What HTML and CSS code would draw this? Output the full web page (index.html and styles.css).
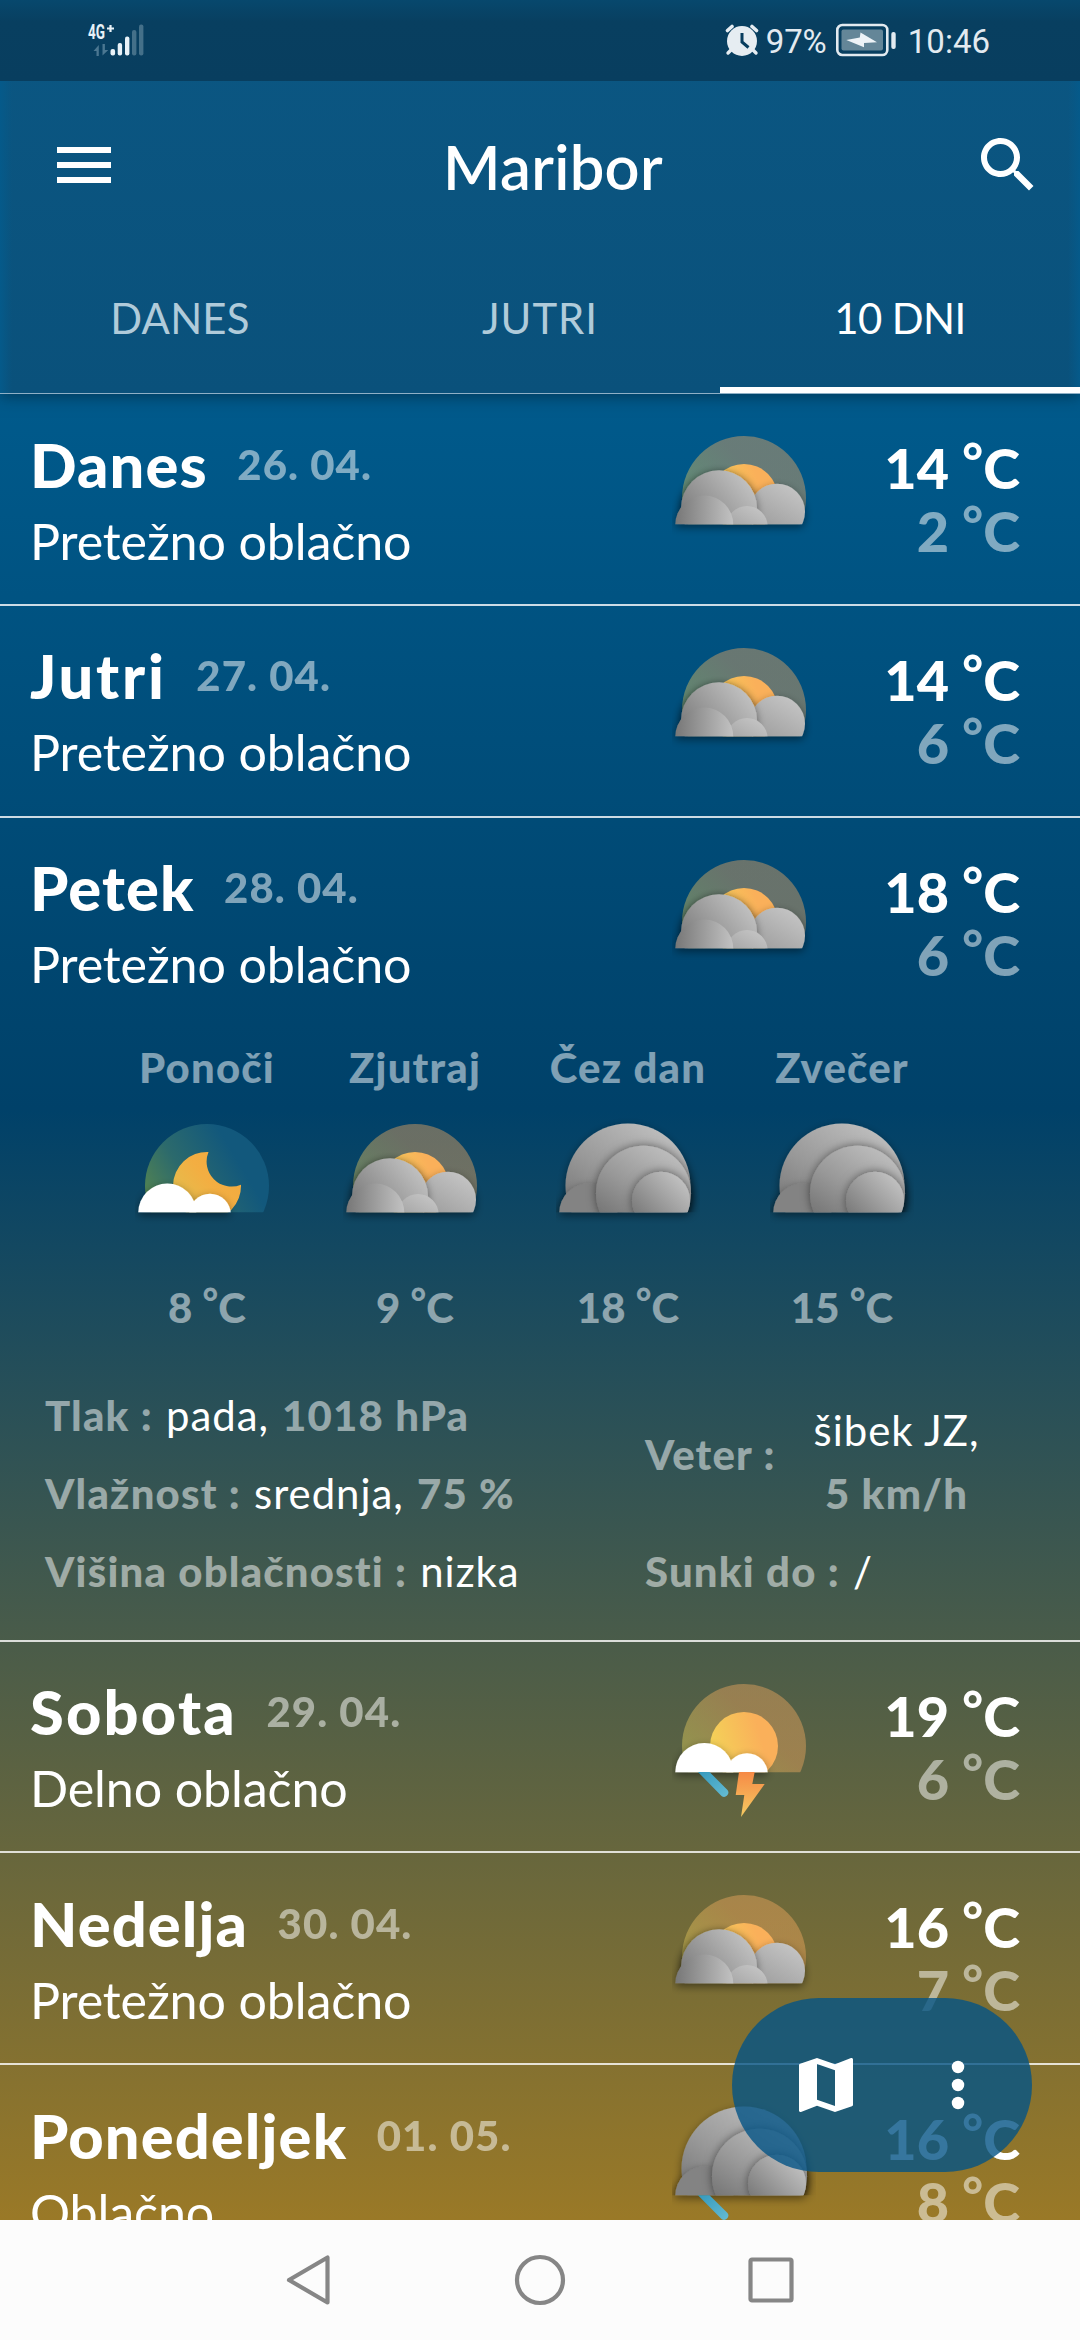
FILE: index.html
```html
<!DOCTYPE html>
<html lang="sl">
<head>
<meta charset="utf-8">
<title>Maribor</title>
<link rel="stylesheet" href="styles.css">
</head>
<body>
<svg class="defs" width="0" height="0" aria-hidden="true">
  <defs>
    <linearGradient id="sun" x1="0" y1=".6" x2="1" y2=".3"><stop offset="0" stop-color="#f3d458"/><stop offset=".75" stop-color="#fab05a"/></linearGradient>
    <linearGradient id="halo" x1="0" y1=".7" x2=".7" y2="0"><stop offset="0" stop-color="#e0e25c"/><stop offset=".7" stop-color="#f8ac60"/></linearGradient>
    <linearGradient id="nightHalo" x1="0" y1=".75" x2=".75" y2=".3"><stop offset="0" stop-color="#5d8a4a"/><stop offset=".5" stop-color="#2c6a6c"/><stop offset="1" stop-color="#12587c"/></linearGradient>
    <linearGradient id="moon" x1="0" y1="1" x2="1" y2=".2"><stop offset="0" stop-color="#dcc552"/><stop offset=".6" stop-color="#f3ae42"/><stop offset="1" stop-color="#f0aa3e"/></linearGradient>
    <linearGradient id="grayA" x1="0" y1=".85" x2=".9" y2=".1"><stop offset="0" stop-color="#6e6e6e"/><stop offset=".45" stop-color="#959595"/><stop offset="1" stop-color="#c4c4c4"/></linearGradient>
    <linearGradient id="grayB" x1="0" y1="0" x2="1" y2="0"><stop offset="0" stop-color="#777"/><stop offset="1" stop-color="#c2c2c2"/></linearGradient>
    <linearGradient id="grayC" x1=".2" y1="1" x2=".8" y2="0"><stop offset="0" stop-color="#959595"/><stop offset="1" stop-color="#c6c6c6"/></linearGradient>
    <linearGradient id="grayD" x1=".1" y1=".9" x2=".7" y2="0"><stop offset="0" stop-color="#6c6c6c"/><stop offset=".5" stop-color="#989898"/><stop offset="1" stop-color="#bdbdbd"/></linearGradient>
    <linearGradient id="grayE" x1=".1" y1=".9" x2=".9" y2=".1"><stop offset="0" stop-color="#747474"/><stop offset="1" stop-color="#c4c4c4"/></linearGradient>
    <linearGradient id="rain" x1="0" y1="0" x2="1" y2="1"><stop offset="0" stop-color="#3499bd"/><stop offset="1" stop-color="#66bcd3"/></linearGradient>
    <linearGradient id="bolt" x1="0" y1="0" x2="0" y2="1"><stop offset="0" stop-color="#f68a46"/><stop offset="1" stop-color="#f5cb62"/></linearGradient>
    <filter id="soft" x="-40%" y="-40%" width="180%" height="180%"><feDropShadow dx="0" dy="3" stdDeviation="4.500" flood-color="#000" flood-opacity=".45"/></filter>
    <filter id="fold" x="-40%" y="-40%" width="180%" height="180%"><feDropShadow dx="0" dy="0" stdDeviation="5" flood-color="#000" flood-opacity=".5"/></filter>
    <clipPath id="ground"><rect x="-80" y="-80" width="160" height="106.3"/></clipPath>

    <symbol id="mostly-cloudy" viewBox="-72 -72 144 160">
      <g clip-path="url(#ground)"><circle r="62" fill="url(#halo)" opacity=".42"/><circle r="34" fill="url(#sun)"/></g>
      <g filter="url(#soft)"><g clip-path="url(#ground)">
        <circle cx="33" cy="13.7" r="28" fill="url(#grayC)"/>
        <circle cx="-25" cy="10.3" r="38" fill="url(#grayA)" filter="url(#soft)"/>
        <circle cx="3" cy="28.5" r="20.6" fill="url(#grayC)"/>
        <circle cx="-39.7" cy="26.5" r="29" fill="url(#grayB)"/>
      </g></g>
    </symbol>
    <symbol id="overcast" viewBox="-72 -72 144 160">
      <g filter="url(#soft)"><g clip-path="url(#ground)">
        <circle r="62.5" fill="url(#grayD)"/>
        <circle cx="-39.7" cy="26.5" r="29" fill="#838383" filter="url(#soft)"/>
        <circle cx="15.5" cy="7.3" r="47.5" fill="url(#grayD)" filter="url(#fold)"/>
        <circle cx="33" cy="14.7" r="29" fill="url(#grayE)" filter="url(#fold)"/>
      </g></g>
    </symbol>
    <symbol id="night" viewBox="-72 -72 144 160">
      <g clip-path="url(#ground)"><circle r="62" fill="url(#nightHalo)"/>
      <path d="M1.5-34A25 25 0 0 0 34-1.3A34 34 0 1 1 1.5-34Z" fill="url(#moon)"/></g>
      <g filter="url(#soft)"><g clip-path="url(#ground)" fill="#fff"><circle cx="-39.7" cy="26.5" r="29"/><circle cx="3" cy="28.5" r="20.8"/></g></g>
    </symbol>
    <symbol id="storm" viewBox="-72 -72 144 160">
      <g clip-path="url(#ground)"><circle r="62" fill="url(#halo)" opacity=".42"/><circle r="34" fill="url(#sun)"/></g>
      <g filter="url(#soft)"><g clip-path="url(#ground)" fill="#fff"><circle cx="-39.7" cy="26" r="29"/><circle cx="3" cy="28" r="20.8"/></g></g>
      <path d="M-46 26h11.500L-16.500 44a4.300 4.300 0 0 1-6 6Z" fill="url(#rain)"/>
      <path d="M-5 26h15.700L8.300 38h12.400L-3 71L.3 49H-8.300Z" fill="url(#bolt)"/>
    </symbol>
    <symbol id="drizzle" viewBox="-72 -72 144 160">
      <use href="#overcast" x="-72" y="-72" width="144" height="160"/>
      <path d="M-46 26.300h11.500L-16.500 44a4.300 4.300 0 0 1-6 6Z" fill="url(#rain)"/>
    </symbol>
  </defs>
</svg>

<div class="screen">
  <header class="header">
    <div class="status">
      <svg class="signal" width="60" height="36" viewBox="86 22 60 36">
        <text class="net" x="88" y="38.500" textLength="17" lengthAdjust="spacingAndGlyphs">4G</text>
        <path d="M110.500 25v7M107 28.500h7" stroke="#e8f2f8" stroke-width="2.200"/>
        <path d="M98.800 56v-11l-5.300 6h3v5zM102.500 44v11.500l5.800-5.500h-3.400v-6z" fill="#4b7791"/>
        <g fill="#e8f2f8"><rect x="110.500" y="49" width="4.600" height="6.500" rx="2"/><rect x="117.700" y="43" width="4.400" height="12.500" rx="2"/><rect x="125" y="36.500" width="4.400" height="19" rx="2"/></g>
        <g fill="#447089"><rect x="132" y="30" width="4.400" height="25.500" rx="2"/><rect x="139" y="24.500" width="4.400" height="31" rx="2"/></g>
      </svg>
      <div class="status-right">
        <svg width="34" height="34" viewBox="0 0 34 34">
          <path d="M7 28l-4 4M27 28l4 4" stroke="#e6edf2" stroke-width="3.400" stroke-linecap="round" transform="translate(0 -2)"/>
          <path d="M2.500 7.500L7 3.500M31.500 7.500L27 3.500" stroke="#e6edf2" stroke-width="3.600" stroke-linecap="round"/>
          <circle cx="17" cy="18" r="15" fill="#e6edf2"/>
          <path d="M17 10v9l6.500 5.500" fill="none" stroke="#083e5f" stroke-width="3"/>
        </svg>
        <span class="pct">97%</span>
        <svg width="60" height="34" viewBox="0 0 60 34">
          <rect x="1.300" y="2" width="50" height="30" rx="5" fill="none" stroke="#e2eaf0" stroke-width="2.600"/>
          <rect x="5.500" y="6.500" width="41.500" height="21" rx="2" fill="#648698"/>
          <path d="M10.300 17L23.800 14.500L24.500 9.500L41 19.300L28 20V24.300Z" fill="#eef3f7"/>
          <rect x="55.300" y="9" width="4.400" height="17" rx="2" fill="#e2eaf0"/>
        </svg>
        <span class="clock">10:46</span>
      </div>
    </div>
    <div class="appbar">
      <svg width="72" height="72" viewBox="0 0 24 24" fill="#fff"><path d="M3 18h18v-2H3v2zm0-5h18v-2H3v2zm0-7v2h18V6H3z"/></svg>
      <h1 class="title">Maribor</h1>
      <svg width="72" height="72" viewBox="0 0 24 24" fill="#fff"><path d="M15.500 14h-.79l-.28-.27C15.410 12.590 16 11.110 16 9.500 16 5.910 13.090 3 9.500 3S3 5.910 3 9.500 5.910 16 9.500 16c1.610 0 3.090-.59 4.230-1.570l.27.28v.79l5 4.990L20.490 19l-4.990-5zm-6 0C7.010 14 5 11.990 5 9.500S7.010 5 9.500 5 14 7.010 14 9.500 11.990 14 9.500 14z"/></svg>
    </div>
    <nav class="tabs">
      <a class="tab">DANES</a>
      <a class="tab tab-jutri">JUTRI</a>
      <a class="tab active">10 DNI</a>
    </nav>
  </header>

  <main class="days">
    <section class="day">
      <div class="summary">
        <div class="info"><div class="head"><h2>Danes</h2><span class="date">26. 04.</span></div><p>Pretežno oblačno</p></div>
        <svg class="wx"><use href="#mostly-cloudy"/></svg>
        <div class="temps"><div>14 <i>°</i>C</div><div class="low">2 <i>°</i>C</div></div>
      </div>
    </section>
    <section class="day">
      <div class="summary">
        <div class="info"><div class="head"><h2 class="wider">Jutri</h2><span class="date">27. 04.</span></div><p>Pretežno oblačno</p></div>
        <svg class="wx"><use href="#mostly-cloudy"/></svg>
        <div class="temps"><div>14 <i>°</i>C</div><div class="low">6 <i>°</i>C</div></div>
      </div>
    </section>
    <section class="day open">
      <div class="summary">
        <div class="info"><div class="head"><h2>Petek</h2><span class="date">28. 04.</span></div><p>Pretežno oblačno</p></div>
        <svg class="wx"><use href="#mostly-cloudy"/></svg>
        <div class="temps"><div>18 <i>°</i>C</div><div class="low">6 <i>°</i>C</div></div>
      </div>
      <div class="periods">
        <div class="period"><span>Ponoči</span><svg class="wx"><use href="#night"/></svg><span class="deg">8 <i>°</i>C</span></div>
        <div class="period"><span>Zjutraj</span><svg class="wx"><use href="#mostly-cloudy"/></svg><span class="deg">9 <i>°</i>C</span></div>
        <div class="period"><span>Čez dan</span><svg class="wx"><use href="#overcast"/></svg><span class="deg">18 <i>°</i>C</span></div>
        <div class="period"><span>Zvečer</span><svg class="wx"><use href="#overcast"/></svg><span class="deg">15 <i>°</i>C</span></div>
      </div>
      <div class="details">
        <div class="col">
          <div class="item"><b>Tlak :</b><span>pada,</span><b>1018 hPa</b></div>
          <div class="item"><b>Vlažnost :</b><span>srednja,</span><b>75 %</b></div>
          <div class="item"><b>Višina oblačnosti :</b><span>nizka</span></div>
        </div>
        <div class="col">
          <div class="item wind"><b>Veter :</b><div class="wind-value"><span>šibek JZ,</span><b>5 km/h</b></div></div>
          <div class="item"><b>Sunki do :</b><span>/</span></div>
        </div>
      </div>
    </section>
    <section class="day">
      <div class="summary">
        <div class="info"><div class="head"><h2 class="wide">Sobota</h2><span class="date">29. 04.</span></div><p>Delno oblačno</p></div>
        <svg class="wx"><use href="#storm"/></svg>
        <div class="temps"><div>19 <i>°</i>C</div><div class="low">6 <i>°</i>C</div></div>
      </div>
    </section>
    <section class="day">
      <div class="summary">
        <div class="info"><div class="head"><h2>Nedelja</h2><span class="date">30. 04.</span></div><p>Pretežno oblačno</p></div>
        <svg class="wx"><use href="#mostly-cloudy"/></svg>
        <div class="temps"><div>16 <i>°</i>C</div><div class="low">7 <i>°</i>C</div></div>
      </div>
    </section>
    <section class="day">
      <div class="summary">
        <div class="info"><div class="head"><h2>Ponedeljek</h2><span class="date">01. 05.</span></div><p>Oblačno</p></div>
        <svg class="wx"><use href="#drizzle"/></svg>
        <div class="temps"><div>16 <i>°</i>C</div><div class="low">8 <i>°</i>C</div></div>
      </div>
    </section>
  </main>

  <div class="fab">
    <svg width="72" height="72" viewBox="0 0 24 24" fill="#fff"><path d="M20.500 3l-.16.03L15 5.100 9 3 3.360 4.900c-.21.07-.36.25-.36.48V20.500c0 .28.22.5.5.5l.16-.03L9 18.900l6 2.100 5.640-1.900c.21-.07.36-.25.36-.48V3.500c0-.28-.22-.5-.5-.5zM15 19l-6-2.110V5l6 2.110V19z"/></svg>
    <svg width="72" height="72" viewBox="0 0 24 24" fill="#fff"><circle cx="12" cy="6" r="2.080"/><circle cx="12" cy="12" r="2.080"/><circle cx="12" cy="18" r="2.080"/></svg>
  </div>

  <footer class="navbar">
    <svg width="50" height="56" viewBox="0 0 50 56"><path d="M43.500 5.500v45L5 28Z"/></svg>
    <svg width="56" height="56" viewBox="0 0 56 56"><circle cx="28" cy="28" r="23"/></svg>
    <svg width="50" height="56" viewBox="0 0 50 56"><rect x="4.500" y="7.500" width="41" height="41" rx="1.500"/></svg>
  </footer>
</div>
</body>
</html>
```
FILE: styles.css
```css
* { box-sizing: border-box; }
html, body { margin: 0; padding: 0; }
body { width: 1080px; height: 2340px; overflow: hidden; font-family: Lato, "Open Sans", sans-serif; color: #fff; }
h1, h2, p { margin: 0; }
b { font-weight: 900; }
i { font-style: normal; font-size: .9em; line-height: 0; vertical-align: .19em; }
.defs { position: absolute; }

.screen {
  position: relative;
  display: flex;
  flex-direction: column;
  height: 2340px;
  background: linear-gradient(#00689f 0, #004169 1109px, #9a7927 2220px);
}

.header {
  position: relative;
  z-index: 1;
  flex: none;
  height: 394px;
  background: linear-gradient(90deg, #055a8a 0, rgba(5, 90, 138, 0) 12px, rgba(5, 90, 138, 0) 1068px, #055a8a 1080px), linear-gradient(#0b5783, #0a517b);
  border-bottom: 1px solid #8fb0c6;
  box-shadow: 0 3px 14px rgba(0, 30, 45, .5);
}
.status {
  display: flex;
  justify-content: space-between;
  height: 81px;
  padding: 22px 90px 0 86px;
  background: linear-gradient(#07486d 0, #083f60 22px, #083e5f 100%);
}
.signal { overflow: visible; }
.net { font: 700 20px Roboto, sans-serif; fill: #e8f2f8; }
.status-right { display: flex; align-items: flex-start; font: 400 33px/39px Roboto, sans-serif; color: #e2eaf0; padding-top: 1px; }
.status-right span { margin-top: -1px; }
.status-right .pct { width: 63px; margin-left: 7px; margin-right: 7px; letter-spacing: -.2px; }
.clock { margin-left: 12px; }
.appbar { display: flex; align-items: center; justify-content: space-between; height: 168px; padding: 0 36px 0 48px; }
.title { font-weight: 600; font-size: 61.4px; line-height: 74px; letter-spacing: .3px; margin: 2px 0 0 14px; }
.tabs { display: flex; height: 144px; }
.tab { flex: 1; border-bottom: 6px solid transparent; text-align: center; font-size: 41.9px; line-height: 139px; color: #b0cbda; letter-spacing: .2px; }
.tab-jutri { letter-spacing: 1px; }
.tab.active { color: #fff; border-bottom-color: #fff; letter-spacing: -.6px; }

.days { height: 1826px; overflow: hidden; }
.day { height: 211.75px; border-bottom: 2px solid rgba(255, 255, 255, .8); }
.day.open { height: 824px; }
.summary { display: grid; grid-template-columns: 642px 144px 1fr; padding: 0 60px 0 30px; height: 212px; }
.info { padding-top: 33.5px; white-space: nowrap; }
.head { display: flex; height: 72px; line-height: 72px; }
.head h2 { font-size: 61.4px; font-weight: 900; letter-spacing: 1.1px; }
.head h2.wide { letter-spacing: 2.2px; }
.head h2.wider { letter-spacing: 2.8px; }
.date { margin-left: 29.5px; font-size: 41.9px; font-weight: 900; letter-spacing: 1.1px; opacity: .5; }
.info p { margin-top: 11px; font-size: 50.2px; line-height: 60px; letter-spacing: -.12px; }
.wx { display: block; width: 144px; height: 160px; }
.summary .wx { margin-top: 32px; }
.temps { padding-top: 42px; text-align: right; font-size: 55.8px; line-height: 63px; font-weight: 900; white-space: nowrap; }
.low { opacity: .5; }

.periods { display: grid; grid-template-columns: 208px 208px 218px 210px; padding: 12.5px 0 0 103px; }
.period { display: flex; flex-direction: column; align-items: center; font-size: 41.9px; line-height: 50px; font-weight: 900; letter-spacing: 1.2px; color: rgba(255, 255, 255, .5); }
.period .wx { margin: 22px 0 7.5px; }
.period .deg { letter-spacing: .1px; }

.details { display: grid; grid-template-columns: 600px 1fr; padding: 44.5px 0 0 45px; font-size: 41.9px; line-height: 78px; letter-spacing: 1.2px; white-space: nowrap; }
.item { display: flex; gap: 13px; }
.item b { color: rgba(255, 255, 255, .5); }
.item span { letter-spacing: 1px; }
.item.wind { height: 156px; align-items: center; gap: 38px; }
.wind-value { display: flex; flex-direction: column; align-items: center; line-height: 63px; padding-top: 15px; }

.fab {
  position: absolute;
  left: 732px;
  top: 1998px;
  width: 300px;
  height: 174px;
  border-radius: 87px;
  background: rgba(4, 84, 134, .8);
  z-index: 2;
  display: flex;
  align-items: center;
  padding-left: 58px;
  gap: 60px;
}

.navbar { flex: none; height: 120px; background: #fcfcfc; display: flex; align-items: center; justify-content: center; gap: 178px; }
.navbar svg { fill: none; stroke: #868686; stroke-width: 4.2; stroke-linejoin: round; }
```
